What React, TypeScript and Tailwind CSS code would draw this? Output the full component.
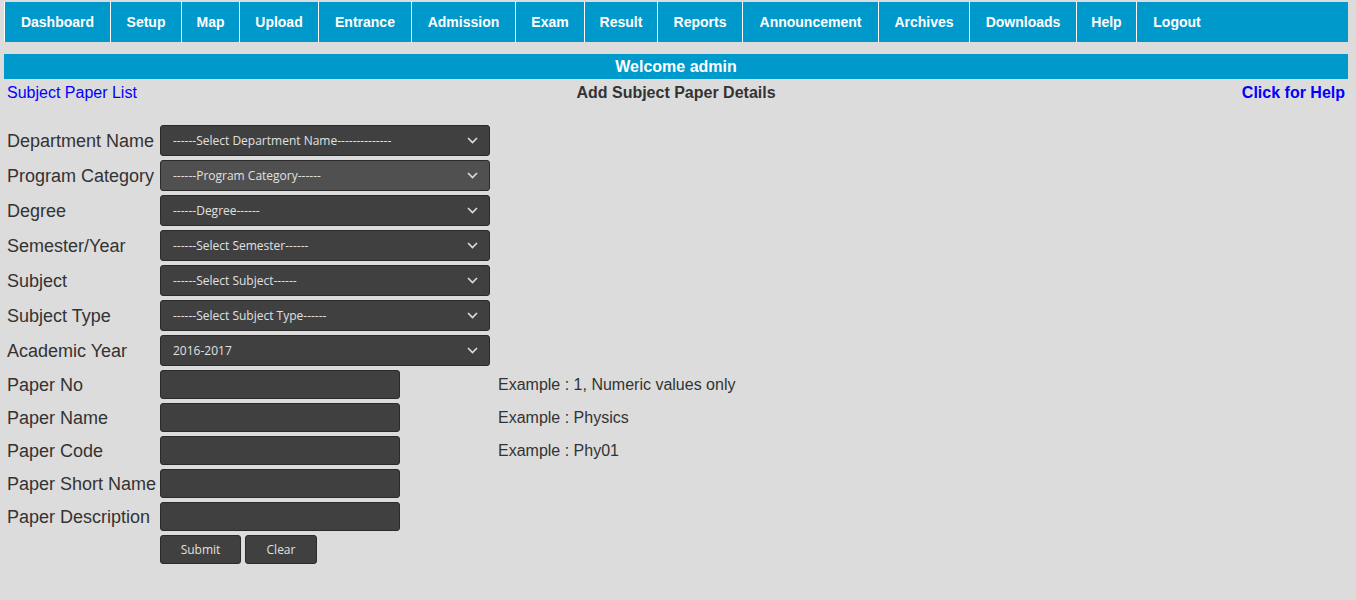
import React from "react";

const navItems: [string, number][] = [
  ["Dashboard", 106],
  ["Setup", 71],
  ["Map", 58],
  ["Upload", 79],
  ["Entrance", 93],
  ["Admission", 104],
  ["Exam", 69],
  ["Result", 73],
  ["Reports", 85],
  ["Announcement", 136],
  ["Archives", 91],
  ["Downloads", 107],
  ["Help", 60],
  ["Logout", 81],
];

const selects: { label: string; text: string; hover?: boolean }[] = [
  { label: "Department Name", text: "------Select Department Name--------------" },
  { label: "Program Category", text: "------Program Category------", hover: true },
  { label: "Degree", text: "------Degree------" },
  { label: "Semester/Year", text: "------Select Semester------" },
  { label: "Subject", text: "------Select Subject------" },
  { label: "Subject Type", text: "------Select Subject Type------" },
  { label: "Academic Year", text: "2016-2017" },
];

const inputs: { label: string; example?: string }[] = [
  { label: "Paper No", example: "Example : 1, Numeric values only" },
  { label: "Paper Name", example: "Example : Physics" },
  { label: "Paper Code", example: "Example : Phy01" },
  { label: "Paper Short Name" },
  { label: "Paper Description" },
];

function Chevron() {
  return (
    <svg width="11" height="7" viewBox="0 0 11 7" className="shrink-0">
      <polyline points="1,1 5.5,5.5 10,1" fill="none" stroke="#dddddd" strokeWidth="1.6" />
    </svg>
  );
}

export default function App() {
  return (
    <div className="min-h-screen bg-[#dcdcdc] font-['Liberation_Sans',Arial,sans-serif] text-[#333333]">
      <div className="ml-[4px] w-[1344px] pt-[2px]">
        <nav className="flex h-[40px] bg-[#0099cc]">
          {navItems.map(([name, w]) => (
            <div
              key={name}
              className="flex items-center justify-center border-l border-white text-[14px] font-bold text-white"
              style={{ width: w }}
            >
              {name}
            </div>
          ))}
        </nav>
        <div className="mt-[12px] flex h-[25px] items-center justify-center bg-[#0099cc] text-[16px] font-bold text-white">
          Welcome admin
        </div>
        <div className="grid h-[24px] grid-cols-3 items-center px-[3px] pt-[2px] text-[16px]">
          <a className="justify-self-start text-[#0000ff]">Subject Paper List</a>
          <div className="justify-self-center font-bold text-[#333333]">Add Subject Paper Details</div>
          <a className="justify-self-end font-bold text-[#0000ff]">Click for Help</a>
        </div>
        <div className="mt-[22px] grid grid-cols-[153px_338px_auto] gap-y-[4px] pl-[3px]">
          {selects.map((s) => (
            <React.Fragment key={s.label}>
              <div className="flex h-[31px] items-center whitespace-nowrap pt-[2px] text-[18px]">{s.label}</div>
              <div
                className={`flex h-[31px] w-[330px] items-center justify-between rounded-[3px] border border-[#2b2b2b] pl-[12px] pr-[11px] font-['Open_Sans',sans-serif] text-[12px] text-[#e0e0e0] ${
                  s.hover ? "bg-[#505050]" : "bg-[#404040]"
                }`}
              >
                <span>{s.text}</span>
                <Chevron />
              </div>
              <div />
            </React.Fragment>
          ))}
          {inputs.map((i) => (
            <React.Fragment key={i.label}>
              <div className="flex h-[29px] items-center whitespace-nowrap pt-[2px] text-[18px]">{i.label}</div>
              <div className="h-[29px] w-[240px] rounded-[3px] border border-[#2b2b2b] bg-[#404040]" />
              <div className="flex h-[29px] items-center text-[16px]">{i.example ?? ""}</div>
            </React.Fragment>
          ))}
          <div />
          <div className="flex gap-[4px] font-['Open_Sans',sans-serif] text-[12px] text-[#e0e0e0]">
            <button className="flex h-[29px] w-[81px] items-center justify-center rounded-[3px] border border-[#2b2b2b] bg-[#404040]">
              Submit
            </button>
            <button className="flex h-[29px] w-[72px] items-center justify-center rounded-[3px] border border-[#2b2b2b] bg-[#404040]">
              Clear
            </button>
          </div>
          <div />
        </div>
      </div>
    </div>
  );
}
